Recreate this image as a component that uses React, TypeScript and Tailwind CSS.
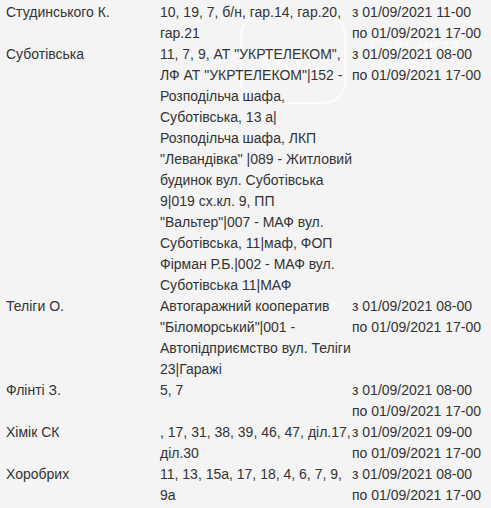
type Row = { street: string; houses: string[]; from: string; to: string };

const rows: Row[] = [
  {
    street: "Студинського К.",
    houses: ["10, 19, 7, б/н, гар.14, гар.20,", "гар.21"],
    from: "з 01/09/2021 11-00",
    to: "по 01/09/2021 17-00",
  },
  {
    street: "Суботівська",
    houses: [
      '11, 7, 9, АТ "УКРТЕЛЕКОМ",',
      'ЛФ АТ "УКРТЕЛЕКОМ"|152 -',
      "Розподільча шафа,",
      "Суботівська, 13 а|",
      "Розподільча шафа, ЛКП",
      '"Левандівка" |089 - Житловий',
      "будинок вул. Суботівська",
      "9|019 сх.кл. 9, ПП",
      '"Вальтер"|007 - МАФ вул.',
      "Суботівська, 11|маф, ФОП",
      "Фірман Р.Б.|002 - МАФ вул.",
      "Суботівська 11|МАФ",
    ],
    from: "з 01/09/2021 08-00",
    to: "по 01/09/2021 17-00",
  },
  {
    street: "Теліги О.",
    houses: [
      "Автогаражний кооператив",
      '"Біломорський"|001 -',
      "Автопідприємство вул. Теліги",
      "23|Гаражі",
    ],
    from: "з 01/09/2021 08-00",
    to: "по 01/09/2021 17-00",
  },
  {
    street: "Флінті З.",
    houses: ["5, 7"],
    from: "з 01/09/2021 08-00",
    to: "по 01/09/2021 17-00",
  },
  {
    street: "Хімік СК",
    houses: [", 17, 31, 38, 39, 46, 47, діл.17,", "діл.30"],
    from: "з 01/09/2021 09-00",
    to: "по 01/09/2021 17-00",
  },
  {
    street: "Хоробрих",
    houses: ["11, 13, 15а, 17, 18, 4, 6, 7, 9,", "9а"],
    from: "з 01/09/2021 08-00",
    to: "по 01/09/2021 17-00",
  },
];

function Watermark() {
  // faint site logo sitting behind the table
  return (
    <div className="pointer-events-none absolute left-[240px] top-[14px] flex items-start gap-6 text-white/70">
      <div className="flex h-[90px] w-[106px] items-center justify-center rounded-[22px] border-2 border-white/70">
        <span className="text-[34px] font-light tracking-wide">032</span>
      </div>
      <div className="mt-[22px] text-[18px] leading-[20px] font-light">
        <div>Сайт міста</div>
        <div>Львова</div>
      </div>
    </div>
  );
}

export default function App() {
  return (
    <div className="relative min-h-screen w-full overflow-hidden bg-[#f4f4f4] font-['Liberation_Sans',Arial,sans-serif] text-[14px] leading-[21px] text-[#333]">
      <Watermark />
      <div className="relative grid grid-cols-[154px_192px_1fr] pt-[2px] pl-[6px]">
        {rows.map((row) => (
          <div key={row.street} className="contents">
            <div className="whitespace-nowrap">{row.street}</div>
            <div>
              {row.houses.map((line, i) => (
                <div key={i} className="whitespace-nowrap">
                  {line}
                </div>
              ))}
            </div>
            <div className="whitespace-nowrap">
              <div>{row.from}</div>
              <div>{row.to}</div>
            </div>
          </div>
        ))}
      </div>
    </div>
  );
}
